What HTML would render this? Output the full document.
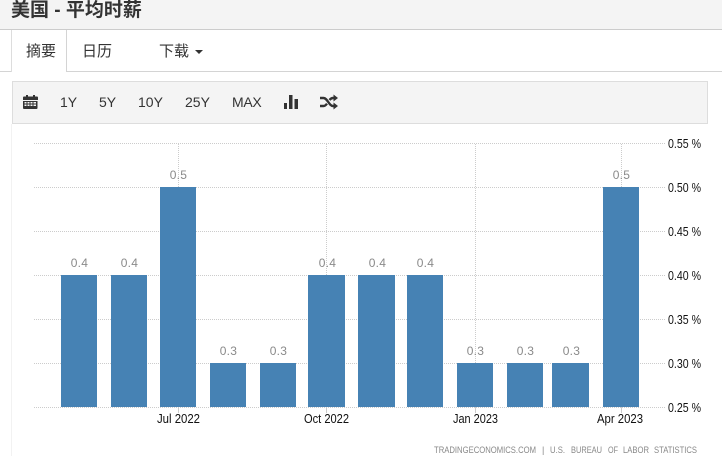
<!DOCTYPE html>
<html lang="zh"><head><meta charset="utf-8"><title>美国 - 平均时薪</title>
<style>
html,body{margin:0;padding:0;background:#fff;}
body{width:722px;height:456px;overflow:hidden;position:relative;font-family:"Liberation Sans","Noto Sans CJK SC",sans-serif;color:#333;}
.abs{position:absolute;white-space:nowrap;}
.head{position:absolute;left:0;top:0;width:722px;height:29px;background:#f4f4f4;border-bottom:1px solid #ccc;}
.title{left:11px;top:-2px;font-size:19px;font-weight:bold;line-height:26px;color:#333;}
.tabline{position:absolute;left:0;top:71px;width:722px;height:1px;background:#d4d4d4;}
.tab{position:absolute;left:11px;top:30px;width:54px;height:42px;background:#fff;border-left:1px solid #ddd;border-right:1px solid #d4d4d4;box-sizing:content-box;}
.t{font-size:15px;line-height:20px;top:42px;color:#333;}
.bar{position:absolute;left:12px;top:81px;width:694px;height:41px;background:#f4f4f4;border:1px solid #ddd;}
.b{font-size:14px;line-height:20px;top:92px;color:#333;}
.caret{position:absolute;left:195px;top:50px;width:0;height:0;border-left:4px solid transparent;border-right:4px solid transparent;border-top:4px solid #333;}
.side{position:absolute;left:11px;top:124px;width:1px;height:332px;background:#f2f2f2;}
svg{position:absolute;left:0;top:0;}
</style></head><body>
<div class="head"></div>
<div class="abs title">美国 - 平均时薪</div>
<div class="tabline"></div>
<div class="tab"></div>
<div class="abs t" style="left:26px">摘要</div>
<div class="abs t" style="left:82px">日历</div>
<div class="abs t" style="left:159px">下载</div>
<div class="caret"></div>
<div class="bar"></div>
<div class="abs b" style="left:60px">1Y</div>
<div class="abs b" style="left:99px">5Y</div>
<div class="abs b" style="left:138px">10Y</div>
<div class="abs b" style="left:185px">25Y</div>
<div class="abs b" style="left:232px;letter-spacing:-.3px">MAX</div>
<div class="side"></div>
<svg width="722" height="456" viewBox="0 0 722 456">
<g fill="#333">
<path d="M23 97.500a1 1 0 0 1 1-1h2v-1.500h2v1.500h5v-1.500h2v1.500h2a1 1 0 0 1 1 1v2.500H23z"/>
<path fill-rule="evenodd" d="M23 101h14.500v7a1 1 0 0 1-1 1H24a1 1 0 0 1-1-1zM24.500 102v1.500h2V102zM27.500 102v1.500h2V102zM30.500 102v1.500h2V102zM33.500 102v1.500h2.500V102zM24.500 104.500V106h2v-1.500zM27.500 104.500V106h2v-1.500zM30.500 104.500V106h2v-1.500zM33.500 104.500V106h2.500v-1.500z"/>
<rect x="284" y="103" width="3" height="6"/><rect x="289" y="95" width="3.500" height="14"/><rect x="294.500" y="99" width="3.500" height="10"/>
</g>
<g fill="none" stroke="#333" stroke-width="2.400">
<path d="M320 98h3.500c4 0 5.500 8 9.500 8h1.500"/>
<path d="M320 106h3.500c1.500 0 2.500-1 3.500-2.300M329.500 100c1-1.200 2-2 3.500-2h1.500"/>
</g>
<g fill="#333"><path d="M333.500 94.500l4.500 3.500-4.500 3.500zM333.500 102.500l4.500 3.500-4.500 3.500z"/></g>
<g stroke="#ccc" stroke-width="1" stroke-dasharray="1 1" fill="none">
<path d="M34 143.500H665M34 187.500H665M34 231.500H665M34 275.500H665M34 319.500H665M34 363.500H665M34 407.500H665"/>
<path d="M178.500 144V407M326.500 144V407M475.500 144V407M621.500 144V407"/>
</g>
<g stroke="#ccc" fill="none"><path d="M178.500 407V413M326.500 407V413M475.500 407V413M621.500 407V413"/></g>
<g fill="#4682b4">
<rect x="61" y="275" width="36" height="132"/>
<rect x="111" y="275" width="36" height="132"/>
<rect x="160" y="187" width="36" height="220"/>
<rect x="210" y="363" width="36" height="44"/>
<rect x="260" y="363" width="36" height="44"/>
<rect x="308" y="275" width="37" height="132"/>
<rect x="358" y="275" width="37" height="132"/>
<rect x="407" y="275" width="36" height="132"/>
<rect x="457" y="363" width="36" height="44"/>
<rect x="507" y="363" width="36" height="44"/>
<rect x="552" y="363" width="37" height="44"/>
<rect x="603" y="187" width="36" height="220"/>
</g>
<g font-family="'Liberation Sans',sans-serif" font-size="12" fill="#8a8a8a" text-anchor="middle" letter-spacing=".3">
<text x="79.500" y="267">0.4</text><text x="129.500" y="267">0.4</text><text x="178.500" y="179">0.5</text>
<text x="228.500" y="355">0.3</text><text x="278.500" y="355">0.3</text><text x="327.500" y="267">0.4</text>
<text x="377.500" y="267">0.4</text><text x="425.500" y="267">0.4</text><text x="475.500" y="355">0.3</text>
<text x="525.500" y="355">0.3</text><text x="571.500" y="355">0.3</text><text x="621.500" y="179">0.5</text>
</g>
<g font-family="'Liberation Sans',sans-serif" font-size="13" fill="#111">
<text x="157" y="423" textLength="43" lengthAdjust="spacingAndGlyphs">Jul 2022</text>
<text x="304" y="423" textLength="45" lengthAdjust="spacingAndGlyphs">Oct 2022</text>
<text x="453" y="423" textLength="45" lengthAdjust="spacingAndGlyphs">Jan 2023</text>
<text x="597" y="423" textLength="46" lengthAdjust="spacingAndGlyphs">Apr 2023</text>
</g>
<g font-family="'Liberation Sans',sans-serif" font-size="13" fill="#111">
<text x="668" y="148" textLength="33" lengthAdjust="spacingAndGlyphs">0.55 %</text>
<text x="668" y="192" textLength="33" lengthAdjust="spacingAndGlyphs">0.50 %</text>
<text x="668" y="236" textLength="33" lengthAdjust="spacingAndGlyphs">0.45 %</text>
<text x="668" y="280" textLength="33" lengthAdjust="spacingAndGlyphs">0.40 %</text>
<text x="668" y="324" textLength="33" lengthAdjust="spacingAndGlyphs">0.35 %</text>
<text x="668" y="368" textLength="33" lengthAdjust="spacingAndGlyphs">0.30 %</text>
<text x="668" y="412" textLength="33" lengthAdjust="spacingAndGlyphs">0.25 %</text>
</g>
<g font-family="'Liberation Sans',sans-serif" font-size="9" fill="#888">
<text x="434" y="453" textLength="102" lengthAdjust="spacingAndGlyphs">TRADINGECONOMICS.COM</text>
<text x="542" y="453">|</text>
<text x="550" y="453" textLength="15" lengthAdjust="spacingAndGlyphs">U.S.</text>
<text x="571" y="453" textLength="31" lengthAdjust="spacingAndGlyphs">BUREAU</text>
<text x="608" y="453" textLength="10" lengthAdjust="spacingAndGlyphs">OF</text>
<text x="623" y="453" textLength="26" lengthAdjust="spacingAndGlyphs">LABOR</text>
<text x="654" y="453" textLength="43" lengthAdjust="spacingAndGlyphs">STATISTICS</text>
</g>
</svg>
</body></html>
